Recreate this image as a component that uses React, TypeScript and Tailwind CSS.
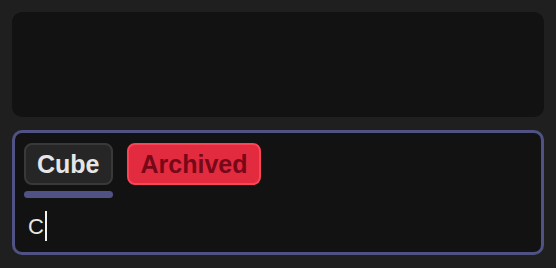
const font = { fontFamily: '"Liberation Sans", Arial, sans-serif' }

const Chip = ({ label, tone }: { label: string; tone: "neutral" | "danger" }) => {
  const cls =
    tone === "danger"
      ? "bg-[#e22b3f] border-[#fb4456] text-[#760818] px-[12px]"
      : "bg-[#262626] border-[#393939] text-[#e6e6e6] px-[11px]"
  return (
    <div
      className={`h-[42px] flex items-center rounded-[8px] border-2 text-[25px] font-bold leading-none ${cls}`}
    >
      {label}
    </div>
  )
}

export default function App() {
  return (
    <div
      className="w-[556px] h-[268px] bg-[#1f1f1f] p-3 flex flex-col gap-[13px]"
      style={font}
    >
      <div className="h-[105px] rounded-[10px] bg-[#121212]" />
      <div className="h-[125px] rounded-[10px] border-[3px] border-[#4f5283] bg-[#121212] px-[9px] pt-[10px]">
        <div className="flex items-start gap-[14px]">
          <div className="flex flex-col gap-[6px]">
            <Chip label="Cube" tone="neutral" />
            <div className="h-[7px] rounded-full bg-[#4f5283]" />
          </div>
          <Chip label="Archived" tone="danger" />
        </div>
        <div className="mt-[13px] flex items-center pl-[4px] h-[30px] text-[22px] text-[#e6e6e6]">
          <span>C</span>
          <span className="ml-[1px] w-[2px] h-[30px] bg-[#f2f2f2]" />
        </div>
      </div>
    </div>
  )
}
